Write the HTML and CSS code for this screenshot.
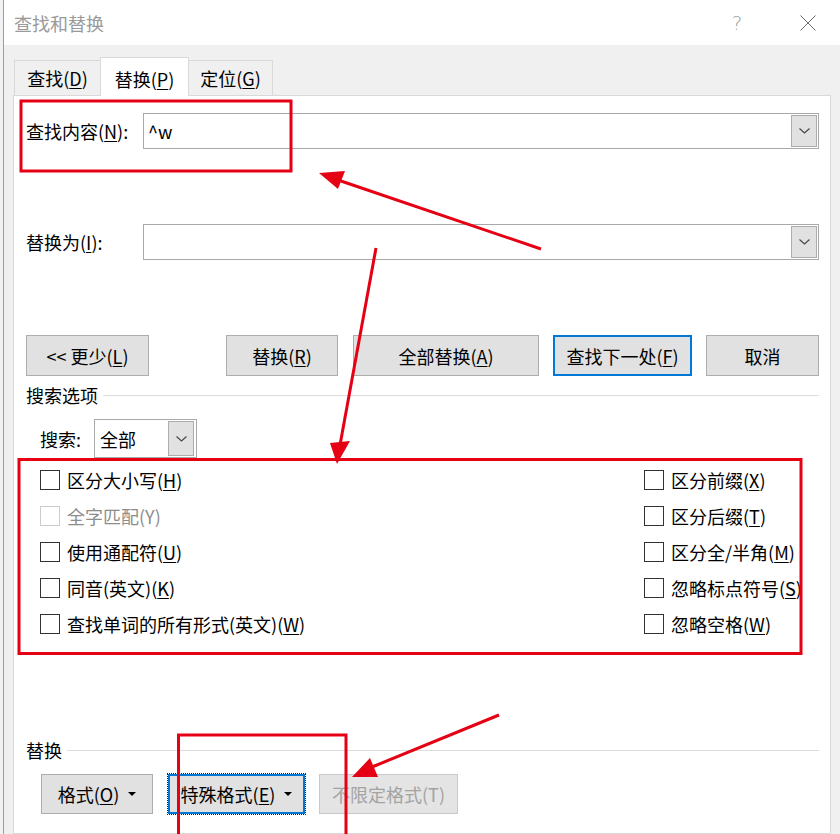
FILE: index.html
```html
<!DOCTYPE html>
<html lang="zh-CN">
<head>
<meta charset="utf-8">
<title>查找和替换</title>
<link rel="stylesheet" href="styles.css">
</head>
<body>
<div class="screen">
  <div class="edge"></div>
  <div class="window">
    <div class="titlebar">
      <span class="title">查找和替换</span>
      <span class="help">?</span>
      <svg class="close" width="16" height="16" viewBox="0 0 16 16"><path d="M0.5 0.5 L15.5 15.5 M15.5 0.5 L0.5 15.5" stroke="#6e6e6e" stroke-width="1" fill="none"/></svg>
    </div>
    <div class="client">
      <div class="tabs">
        <div class="tab tab-find">查找(<u>D</u>)</div>
        <div class="tab tab-active">替换(<u>P</u>)</div>
        <div class="tab tab-goto">定位(<u>G</u>)</div>
      </div>
      <div class="panel">
        <div class="field-row">
          <span class="field-label">查找内容(<u>N</u>):</span>
          <div class="combo">
            <span class="combo-text">^w</span>
            <span class="combo-btn"><svg width="11" height="6" viewBox="0 0 11 6"><path d="M0.5 0.5 L5.5 5 L10.5 0.5" stroke="#444" stroke-width="1.1" fill="none"/></svg></span>
          </div>
        </div>
        <div class="field-row second">
          <span class="field-label">替换为(<u>I</u>):</span>
          <div class="combo">
            <span class="combo-text"></span>
            <span class="combo-btn"><svg width="11" height="6" viewBox="0 0 11 6"><path d="M0.5 0.5 L5.5 5 L10.5 0.5" stroke="#444" stroke-width="1.1" fill="none"/></svg></span>
          </div>
        </div>
        <div class="btn-row">
          <div class="btn w-less">&lt;&lt; 更少(<u>L</u>)</div>
          <div class="btn w-rep">替换(<u>R</u>)</div>
          <div class="btn w-all">全部替换(<u>A</u>)</div>
          <div class="btn w-next default">查找下一处(<u>F</u>)</div>
          <div class="btn w-cancel">取消</div>
        </div>
        <div class="group-head"><span>搜索选项</span></div>
        <div class="search-row">
          <span class="search-label">搜索:</span>
          <div class="combo small">
            <span class="combo-text">全部</span>
            <span class="combo-btn"><svg width="11" height="6" viewBox="0 0 11 6"><path d="M0.5 0.5 L5.5 5 L10.5 0.5" stroke="#444" stroke-width="1.1" fill="none"/></svg></span>
          </div>
        </div>
        <div class="options">
          <label class="check"><span class="box"></span>区分大小写(<u>H</u>)</label>
          <label class="check disabled"><span class="box"></span>全字匹配(Y)</label>
          <label class="check"><span class="box"></span>使用通配符(<u>U</u>)</label>
          <label class="check"><span class="box"></span>同音(英文)(<u>K</u>)</label>
          <label class="check"><span class="box"></span>查找单词的所有形式(英文)(<u>W</u>)</label>
          <label class="check"><span class="box"></span>区分前缀(<u>X</u>)</label>
          <label class="check"><span class="box"></span>区分后缀(<u>T</u>)</label>
          <label class="check"><span class="box"></span>区分全/半角(<u>M</u>)</label>
          <label class="check"><span class="box"></span>忽略标点符号(<u>S</u>)</label>
          <label class="check"><span class="box"></span>忽略空格(<u>W</u>)</label>
        </div>
        <div class="group-head replace-head"><span>替换</span></div>
        <div class="bottom-row">
          <div class="btn w-fmt">格式(<u>O</u>)<span class="caret"></span></div>
          <div class="btn w-special focus">特殊格式(<u>E</u>)<span class="caret"></span></div>
          <div class="btn w-nofmt disabled">不限定格式(T)</div>
        </div>
      </div>
    </div>
  </div>
  <svg class="annot" width="840" height="834" viewBox="0 0 840 834">
    <g fill="none" stroke="#e50014" stroke-width="3">
      <rect x="21" y="101" width="270" height="70"/>
      <rect x="19" y="459.5" width="782" height="194"/>
      <rect x="178.5" y="735" width="167.5" height="130"/>
    </g>
    <g stroke="#e50014" stroke-width="3">
      <line x1="541" y1="249" x2="338" y2="180"/>
      <line x1="376" y1="248" x2="340" y2="445"/>
      <line x1="499" y1="715" x2="372" y2="767"/>
    </g>
    <g fill="#e50014">
      <polygon points="319,173 345,171 338,189"/>
      <polygon points="330,443 350,441 337,464"/>
      <polygon points="352,777 370,758 378,777"/>
    </g>
  </svg>
</div>
</body>
</html>
```

FILE: styles.css
```css
* { box-sizing: border-box; }
html, body { margin: 0; padding: 0; }
body {
  width: 840px;
  height: 834px;
  overflow: hidden;
  background: #fff;
  font-family: "Noto Sans CJK SC", "Noto Sans", sans-serif;
  font-size: 18px;
  color: #000;
}
u { text-decoration: underline; text-underline-offset: 2px; text-decoration-thickness: 1px; }

.screen {
  position: relative;
  width: 840px;
  height: 834px;
  display: flex;
  overflow: hidden;
}
.edge { width: 3px; flex: none; background: #f2f2f2; }
.window {
  flex: 1;
  min-width: 0;
  display: flex;
  flex-direction: column;
  border-left: 1px solid #9c9c9c;
}

/* title bar */
.titlebar {
  height: 45px;
  flex: none;
  background: #fff;
  display: flex;
  align-items: center;
  padding-left: 10px;
}
.title { color: #9a9a9a; line-height: 22px; }
.help {
  margin-left: auto;
  width: 20px;
  text-align: center;
  color: #9f9f9f;
  font-family: "DejaVu Sans", sans-serif;
  font-weight: 200;
  font-size: 20px;
  line-height: 22px;
}
.close { margin-left: 53px; margin-right: 24px; display: block; }

/* client */
.client {
  flex: 1;
  background: #f0f0f0;
  padding: 12px 9px 0 9px;
  display: flex;
  flex-direction: column;
}
.tabs {
  display: flex;
  align-items: flex-end;
  height: 38px;
  padding-left: 1px;
  flex: none;
}
.tab {
  height: 35px;
  border: 1px solid #d9d9d9;
  border-bottom: none;
  background: #f0f0f0;
  display: flex;
  align-items: center;
  justify-content: center;
  line-height: 22px;
}
.tab-find { width: 87px; }
.tab-active {
  width: 89px;
  height: 39px;
  margin-left: -1px;
  margin-bottom: -1px;
  padding-top: 3px;
  background: #fff;
  position: relative;
  z-index: 1;
}
.tab-goto { width: 85px; margin-left: -1px; }

.panel {
  flex: 1;
  background: #fff;
  border: 1px solid #d9d9d9;
  padding: 17px 11px 0 12px;
  display: flex;
  flex-direction: column;
}

.field-row { display: flex; align-items: center; height: 36px; flex: none; }
.field-row.second { margin-top: 75px; }
.field-label { width: 117px; flex: none; line-height: 22px; }

.combo {
  flex: 1;
  height: 36px;
  border: 1px solid #a9a9a9;
  background: #fff;
  padding: 1px;
  display: flex;
  align-items: center;
}
.combo-text { flex: 1; padding-left: 3px; line-height: 22px; }
.combo-btn {
  width: 26px;
  height: 32px;
  flex: none;
  background: #e1e1e1;
  border: 1px solid #adadad;
  display: flex;
  align-items: center;
  justify-content: center;
}
.combo.small { flex: none; width: 103px; height: 39px; padding: 1px 2px 1px 1px; }
.combo.small .combo-text { padding-left: 4px; }
.combo.small .combo-btn { height: 35px; }

/* buttons */
.btn {
  height: 41px;
  flex: none;
  border: 1px solid #adadad;
  background: #e1e1e1;
  display: flex;
  align-items: center;
  justify-content: center;
  line-height: 22px;
}
.btn.default { border: 2px solid #0078d7; }
.btn-row { display: flex; margin-top: 75px; flex: none; }
.w-less { width: 123px; }
.w-rep { width: 112px; margin-left: 77px; }
.w-all { width: 186px; margin-left: 15px; }
.w-next { width: 139px; margin-left: 14px; }
.w-cancel { width: 113px; margin-left: 14px; }

.group-head {
  display: flex;
  align-items: center;
  height: 22px;
  margin-top: 8px;
  flex: none;
}
.group-head span { line-height: 22px; }
.group-head::after {
  content: "";
  flex: 1;
  height: 1px;
  background: #dcdcdc;
  margin-left: 5px;
}

.search-row { display: flex; align-items: center; margin-top: 13px; margin-left: 14px; flex: none; }
.search-label { width: 54px; line-height: 22px; }

.options {
  display: grid;
  grid-template-columns: 604px 1fr;
  grid-template-rows: repeat(5, 36px);
  grid-auto-flow: column;
  margin: 4px 0 0 14px;
  flex: none;
}
.check { display: flex; align-items: center; line-height: 22px; white-space: nowrap; }
.box {
  width: 20px;
  height: 20px;
  flex: none;
  border: 1px solid #333;
  background: #fff;
  margin-right: 7px;
}
.check.disabled { color: #8d8d8d; }
.check.disabled .box { border-color: #cccccc; }

.replace-head { margin-top: 97px; }

.bottom-row { display: flex; margin-top: 13px; margin-left: 15px; flex: none; }
.bottom-row .btn { height: 40px; }
.w-fmt { width: 112px; }
.w-special { width: 137px; margin-left: 15px; }
.w-nofmt { width: 139px; margin-left: 14px; }
.btn.focus { border: 2px solid #0078d7; outline: 1px dotted #222; outline-offset: 0; }
.btn.disabled { color: #a3a3a3; background: #e4e4e4; border-color: #c9c9c9; }
.caret {
  width: 0;
  height: 0;
  margin-left: 9px;
  border-left: 4px solid transparent;
  border-right: 4px solid transparent;
  border-top: 4px solid #000;
}

.annot {
  position: absolute;
  left: 0;
  top: 0;
  pointer-events: none;
  z-index: 10;
}
```
